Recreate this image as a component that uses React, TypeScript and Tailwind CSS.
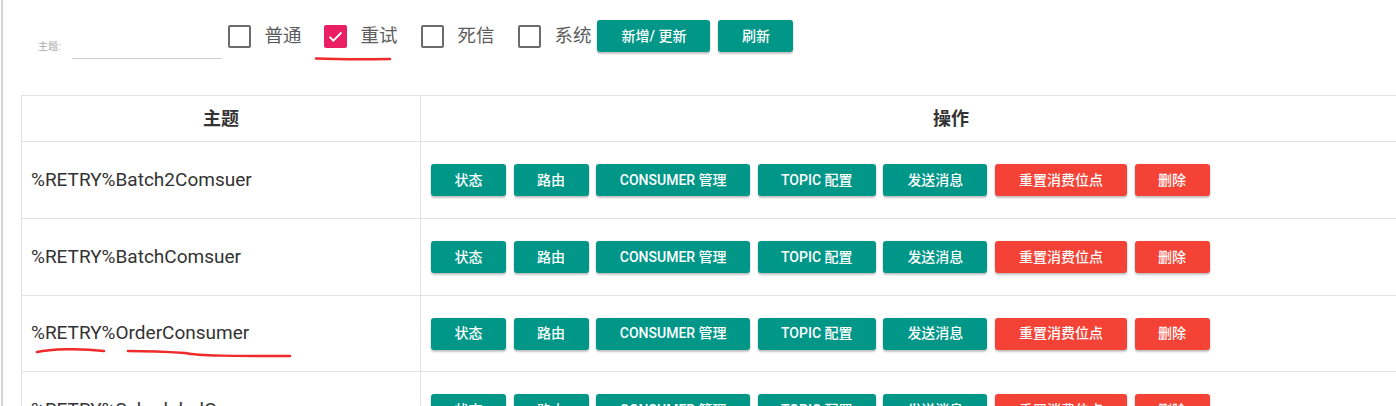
import React from "react";

const FONT = { fontFamily: 'Roboto, "Noto Sans CJK SC", "Noto Sans", sans-serif' };

function Box({ checked }: { checked?: boolean }) {
  if (checked) {
    return (
      <span className="flex h-[23px] w-[23px] items-center justify-center rounded-[2px] bg-[#e91e63]">
        <svg width="19" height="19" viewBox="0 0 24 24" fill="none">
          <path d="M4.5 12.5l4.8 4.8L19.5 7" stroke="white" strokeWidth="2.4" />
        </svg>
      </span>
    );
  }
  return <span className="block h-[23px] w-[23px] rounded-[2px] border-[2.5px] border-[#6b6b6b]" />;
}

function Check({ label, checked, ml }: { label: string; checked?: boolean; ml: string }) {
  return (
    <div className={`flex items-center ${ml}`}>
      <Box checked={checked} />
      <span className="ml-[13px] text-[18.5px] leading-[23px] text-[#5c5c5c]">{label}</span>
    </div>
  );
}

const btnBase =
  "h-[32px] rounded-[3px] text-[14px] font-medium text-white shadow-[0_2px_2px_rgba(0,0,0,0.22),0_0_2px_rgba(0,0,0,0.12)] whitespace-nowrap";

function Row({ name, h }: { name: string; h: string }) {
  return (
    <div className={`flex ${h} border-t border-[#e3e3e3]`}>
      <div className="flex w-[398px] shrink-0 items-center pl-[9px] text-[19px] text-[#333]">{name}</div>
      <div className="flex flex-1 items-center gap-[7.6px] border-l border-[#e3e3e3] pl-[10px]">
        <button className={`${btnBase} w-[75px] bg-[#009688]`}>状态</button>
        <button className={`${btnBase} w-[75px] bg-[#009688]`}>路由</button>
        <button className={`${btnBase} w-[154px] bg-[#009688]`}>CONSUMER 管理</button>
        <button className={`${btnBase} w-[118px] bg-[#009688]`}>TOPIC 配置</button>
        <button className={`${btnBase} w-[104px] bg-[#009688]`}>发送消息</button>
        <button className={`${btnBase} w-[132px] bg-[#f44336]`}>重置消费位点</button>
        <button className={`${btnBase} w-[75px] bg-[#f44336]`}>删除</button>
      </div>
    </div>
  );
}

export default function App() {
  return (
    <div className="relative h-[406px] w-[1396px] overflow-hidden bg-white" style={FONT}>
      <div className="ml-[1px] h-full border-l-[2px] border-[#d4d4d4]">
        <div className="flex h-[95px] items-start pt-[20px]">
          <div className="ml-[35px] flex h-[39px] items-end">
            <span className="mb-[5px] text-[10px] text-[#aaa]">主题:</span>
            <div className="ml-[12px] h-[20px] w-[150px] border-b border-[#cfcfcf]" />
          </div>
          <div className="flex h-[32px] items-center">
            <Check label="普通" ml="ml-[6px]" />
            <Check label="重试" checked ml="ml-[23px]" />
            <Check label="死信" ml="ml-[24px]" />
            <Check label="系统" ml="ml-[24px]" />
          </div>
          <button className={`${btnBase} ml-[6px] w-[113px] bg-[#009688]`}>新增/ 更新</button>
          <button className={`${btnBase} ml-[8px] w-[75px] bg-[#009688]`}>刷新</button>
        </div>
        <div className="ml-[18px] w-[1460px] border-l border-t border-[#e3e3e3]">
          <div className="flex h-[45px] text-[18px] font-bold text-[#333]">
            <div className="flex w-[398px] shrink-0 items-center justify-center">主题</div>
            <div className="flex flex-1 items-center justify-center border-l border-[#e3e3e3]">操作</div>
          </div>
          <Row name="%RETRY%Batch2Comsuer" h="h-[77px]" />
          <Row name="%RETRY%BatchComsuer" h="h-[77px]" />
          <Row name="%RETRY%OrderConsumer" h="h-[76px]" />
          <Row name="%RETRY%ScheduledConsumer" h="h-[77px]" />
        </div>
      </div>
      <svg className="pointer-events-none absolute left-0 top-0" width="1396" height="406" fill="none">
        <path d="M316 58.5 C340 59.5, 365 59.5, 390 59" stroke="#ee2a2a" strokeWidth="2.5" strokeLinecap="round" />
        <path d="M37 352 C50 349, 80 348, 104 351" stroke="#ee2a2a" strokeWidth="2.5" strokeLinecap="round" />
        <path d="M128 351 C150 351, 170 352, 185 353 C200 356, 230 356, 290 356" stroke="#ee2a2a" strokeWidth="2.5" strokeLinecap="round" />
      </svg>
    </div>
  );
}
